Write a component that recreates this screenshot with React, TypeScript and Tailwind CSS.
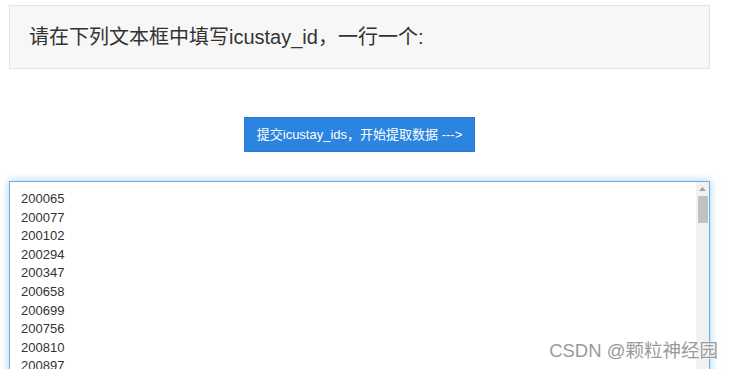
const IDS = [
  '200065', '200077', '200102', '200294', '200347', '200658', '200699', '200756',
  '200810', '200897', '200947', '201006', '201118', '201204', '201398', '201422',
];

const FONT = { fontFamily: '"Liberation Sans", "Noto Sans CJK SC", sans-serif' };

export default function App() {
  return (
    <div className="relative h-[369px] overflow-hidden bg-white text-[#333]" style={FONT}>
      {/* Prompt panel */}
      <div className="mt-[5px] ml-[9px] w-[701px] h-[64px] flex items-center pl-[19px] border border-[#e3e3e3] bg-[#f7f7f7] text-[20px]">
        请在下列文本框中填写icustay_id，一行一个:
      </div>

      {/* Submit */}
      <div className="mt-[48px] ml-[9px] w-[701px] flex justify-center">
        <button
          type="button"
          className="h-[35px] px-[12px] border border-[#2a7ad0] bg-[#2a84e0] text-white text-[13px]"
        >
          提交icustay_ids，开始提取数据 ---&gt;
        </button>
      </div>

      {/* Id list */}
      <div className="mt-[29px] ml-[9px] w-[701px] h-[300px] flex border border-[#66afe9] shadow-[0_0_8px_rgba(102,175,233,0.6)] bg-white">
        <div className="flex-1 pl-[11px] pt-[8px] text-[13px] leading-[18.6px] overflow-hidden">
          {IDS.map((id) => (
            <div key={id}>{id}</div>
          ))}
        </div>
        <div className="w-[13px] bg-[#f1f1f1] flex flex-col items-center">
          <div className="h-[14px] flex items-center justify-center">
            <svg width="7" height="4" viewBox="0 0 7 4">
              <path d="M0 4 L3.5 0 L7 4 Z" fill="#a3a3a3" />
            </svg>
          </div>
          <div className="w-[10px] h-[27px] bg-[#c1c1c1]" />
        </div>
      </div>

      {/* Watermark */}
      <div
        className="absolute right-[15px] bottom-[9px] text-[18.5px] text-[#9a9a9a] leading-none"
        style={{ textShadow: '0 0 2px #fff, 0 0 1px #fff' }}
      >
        CSDN @颗粒神经园
      </div>
    </div>
  );
}
